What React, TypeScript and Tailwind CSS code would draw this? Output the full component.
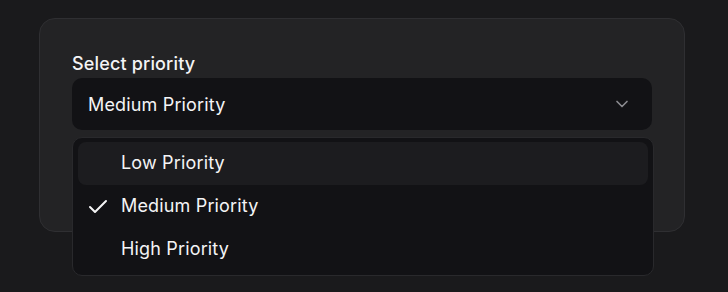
import React, { useState } from 'react';
import { Check, ChevronDown } from 'lucide-react';

const OPTIONS = ['Low Priority', 'Medium Priority', 'High Priority'];

const App: React.FC = () => {
  const [value, setValue] = useState('Medium Priority');
  const [hovered, setHovered] = useState('Low Priority');

  return (
    <div
      className="min-h-screen w-full bg-[#1a1a1c] pt-[18px] pl-[39px] tracking-[0.01em]"
      style={{ fontFamily: 'Inter, "Noto Sans", sans-serif' }}
    >
      {/* Card */}
      <div className="relative w-[646px] h-[214px] rounded-2xl border border-[#2f2f32] bg-[#232325] px-8 pt-[31px]">
        <label className="block text-[18px] leading-[28px] font-medium text-[#f4f4f5]">
          Select priority
        </label>

        {/* Trigger */}
        <button
          type="button"
          className="flex h-[52px] w-[580px] items-center justify-between rounded-[10px] bg-[#121215] pl-4 pr-5 text-[18px] text-[#f4f4f5]"
        >
          <span>{value}</span>
          <ChevronDown size={20} strokeWidth={2} className="text-[#8b8b90]" />
        </button>

        {/* Dropdown */}
        <div className="absolute left-8 top-[118px] z-10 w-[582px] rounded-[10px] border border-[#29292c] bg-[#121215] px-[5px] py-1">
          {OPTIONS.map((opt) => (
            <div
              key={opt}
              onMouseEnter={() => setHovered(opt)}
              onClick={() => setValue(opt)}
              className={`relative flex h-[43px] items-center rounded-lg pb-[2px] pl-[43px] text-[18px] text-[#f4f4f5] ${
                hovered === opt ? 'bg-[#1c1c1f]' : ''
              }`}
            >
              {value === opt && (
                <Check size={24} strokeWidth={2} className="absolute left-2 top-1/2 -translate-y-1/2 text-[#f4f4f5]" />
              )}
              {opt}
            </div>
          ))}
        </div>
      </div>
    </div>
  );
};

export default App;
